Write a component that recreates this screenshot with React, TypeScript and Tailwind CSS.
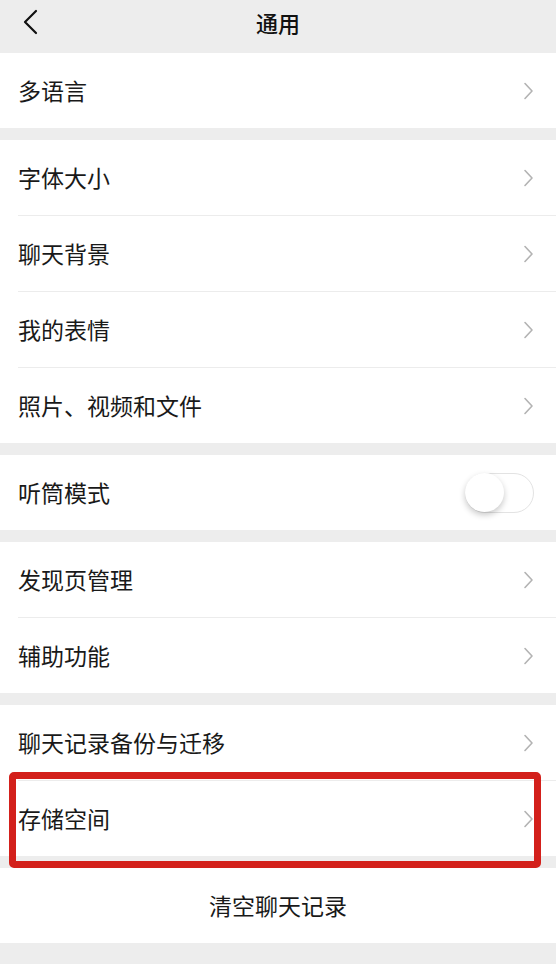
import { Fragment } from "react";

type Row = { label: string; toggle?: boolean; highlight?: boolean };

const groups: Row[][] = [
  [{ label: "多语言" }],
  [
    { label: "字体大小" },
    { label: "聊天背景" },
    { label: "我的表情" },
    { label: "照片、视频和文件" },
  ],
  [{ label: "听筒模式", toggle: true }],
  [{ label: "发现页管理" }, { label: "辅助功能" }],
  [{ label: "聊天记录备份与迁移" }, { label: "存储空间", highlight: true }],
];

function Chevron() {
  return (
    <svg width="11" height="18" viewBox="0 0 11 18" fill="none">
      <path d="M2 1.5L9 9L2 16.5" stroke="#b3b3b3" strokeWidth="1.6" strokeLinecap="round" strokeLinejoin="round" />
    </svg>
  );
}

function Toggle() {
  return (
    <div className="relative h-[40px] w-[69px] rounded-full border-[1.5px] border-[#e3e3e3] bg-white">
      <div className="absolute left-[-1px] top-[-1px] h-[39px] w-[39px] rounded-full bg-white shadow-[0_3px_6px_rgba(0,0,0,0.22)]" />
    </div>
  );
}

function SettingRow({ row }: { row: Row }) {
  return (
    <div className="relative flex h-[75px] items-center justify-between bg-white pl-[18px] pr-[22px]">
      <span className="text-[23px] text-[#191919]">{row.label}</span>
      {row.toggle ? <Toggle /> : <Chevron />}
      {row.highlight && (
        <div className="pointer-events-none absolute left-[9px] right-[15px] top-[-9px] bottom-[-12px] rounded-[5px] border-[7px] border-[#d3201b]" />
      )}
    </div>
  );
}

export default function App() {
  return (
    <div
      className="min-h-[964px] w-[556px] bg-[#ededed]"
      style={{ fontFamily: '"Noto Sans CJK SC", "Noto Sans", sans-serif' }}
    >
      {/* Header */}
      <div className="relative flex h-[53px] items-center justify-center bg-[#ededed] pb-[9px]">
        <svg className="absolute left-[23px] top-[9px]" width="15" height="26" viewBox="0 0 15 26" fill="none">
          <path d="M13 2L2 13L13 24" stroke="#111" strokeWidth="2.2" strokeLinecap="round" strokeLinejoin="round" />
        </svg>
        <span className="text-[22px] font-medium text-[#111]">通用</span>
      </div>

      <div className="flex flex-col gap-[12px]">
        {groups.map((group, gi) => (
          <div key={gi} className="bg-white">
            {group.map((row, ri) => (
              <Fragment key={row.label}>
                {ri > 0 && <div className="ml-[18px] h-px bg-[#ececec]" />}
                <SettingRow row={row} />
              </Fragment>
            ))}
          </div>
        ))}

        <div className="flex h-[75px] items-center justify-center bg-white">
          <span className="text-[23px] text-[#191919]">清空聊天记录</span>
        </div>
      </div>
    </div>
  );
}
